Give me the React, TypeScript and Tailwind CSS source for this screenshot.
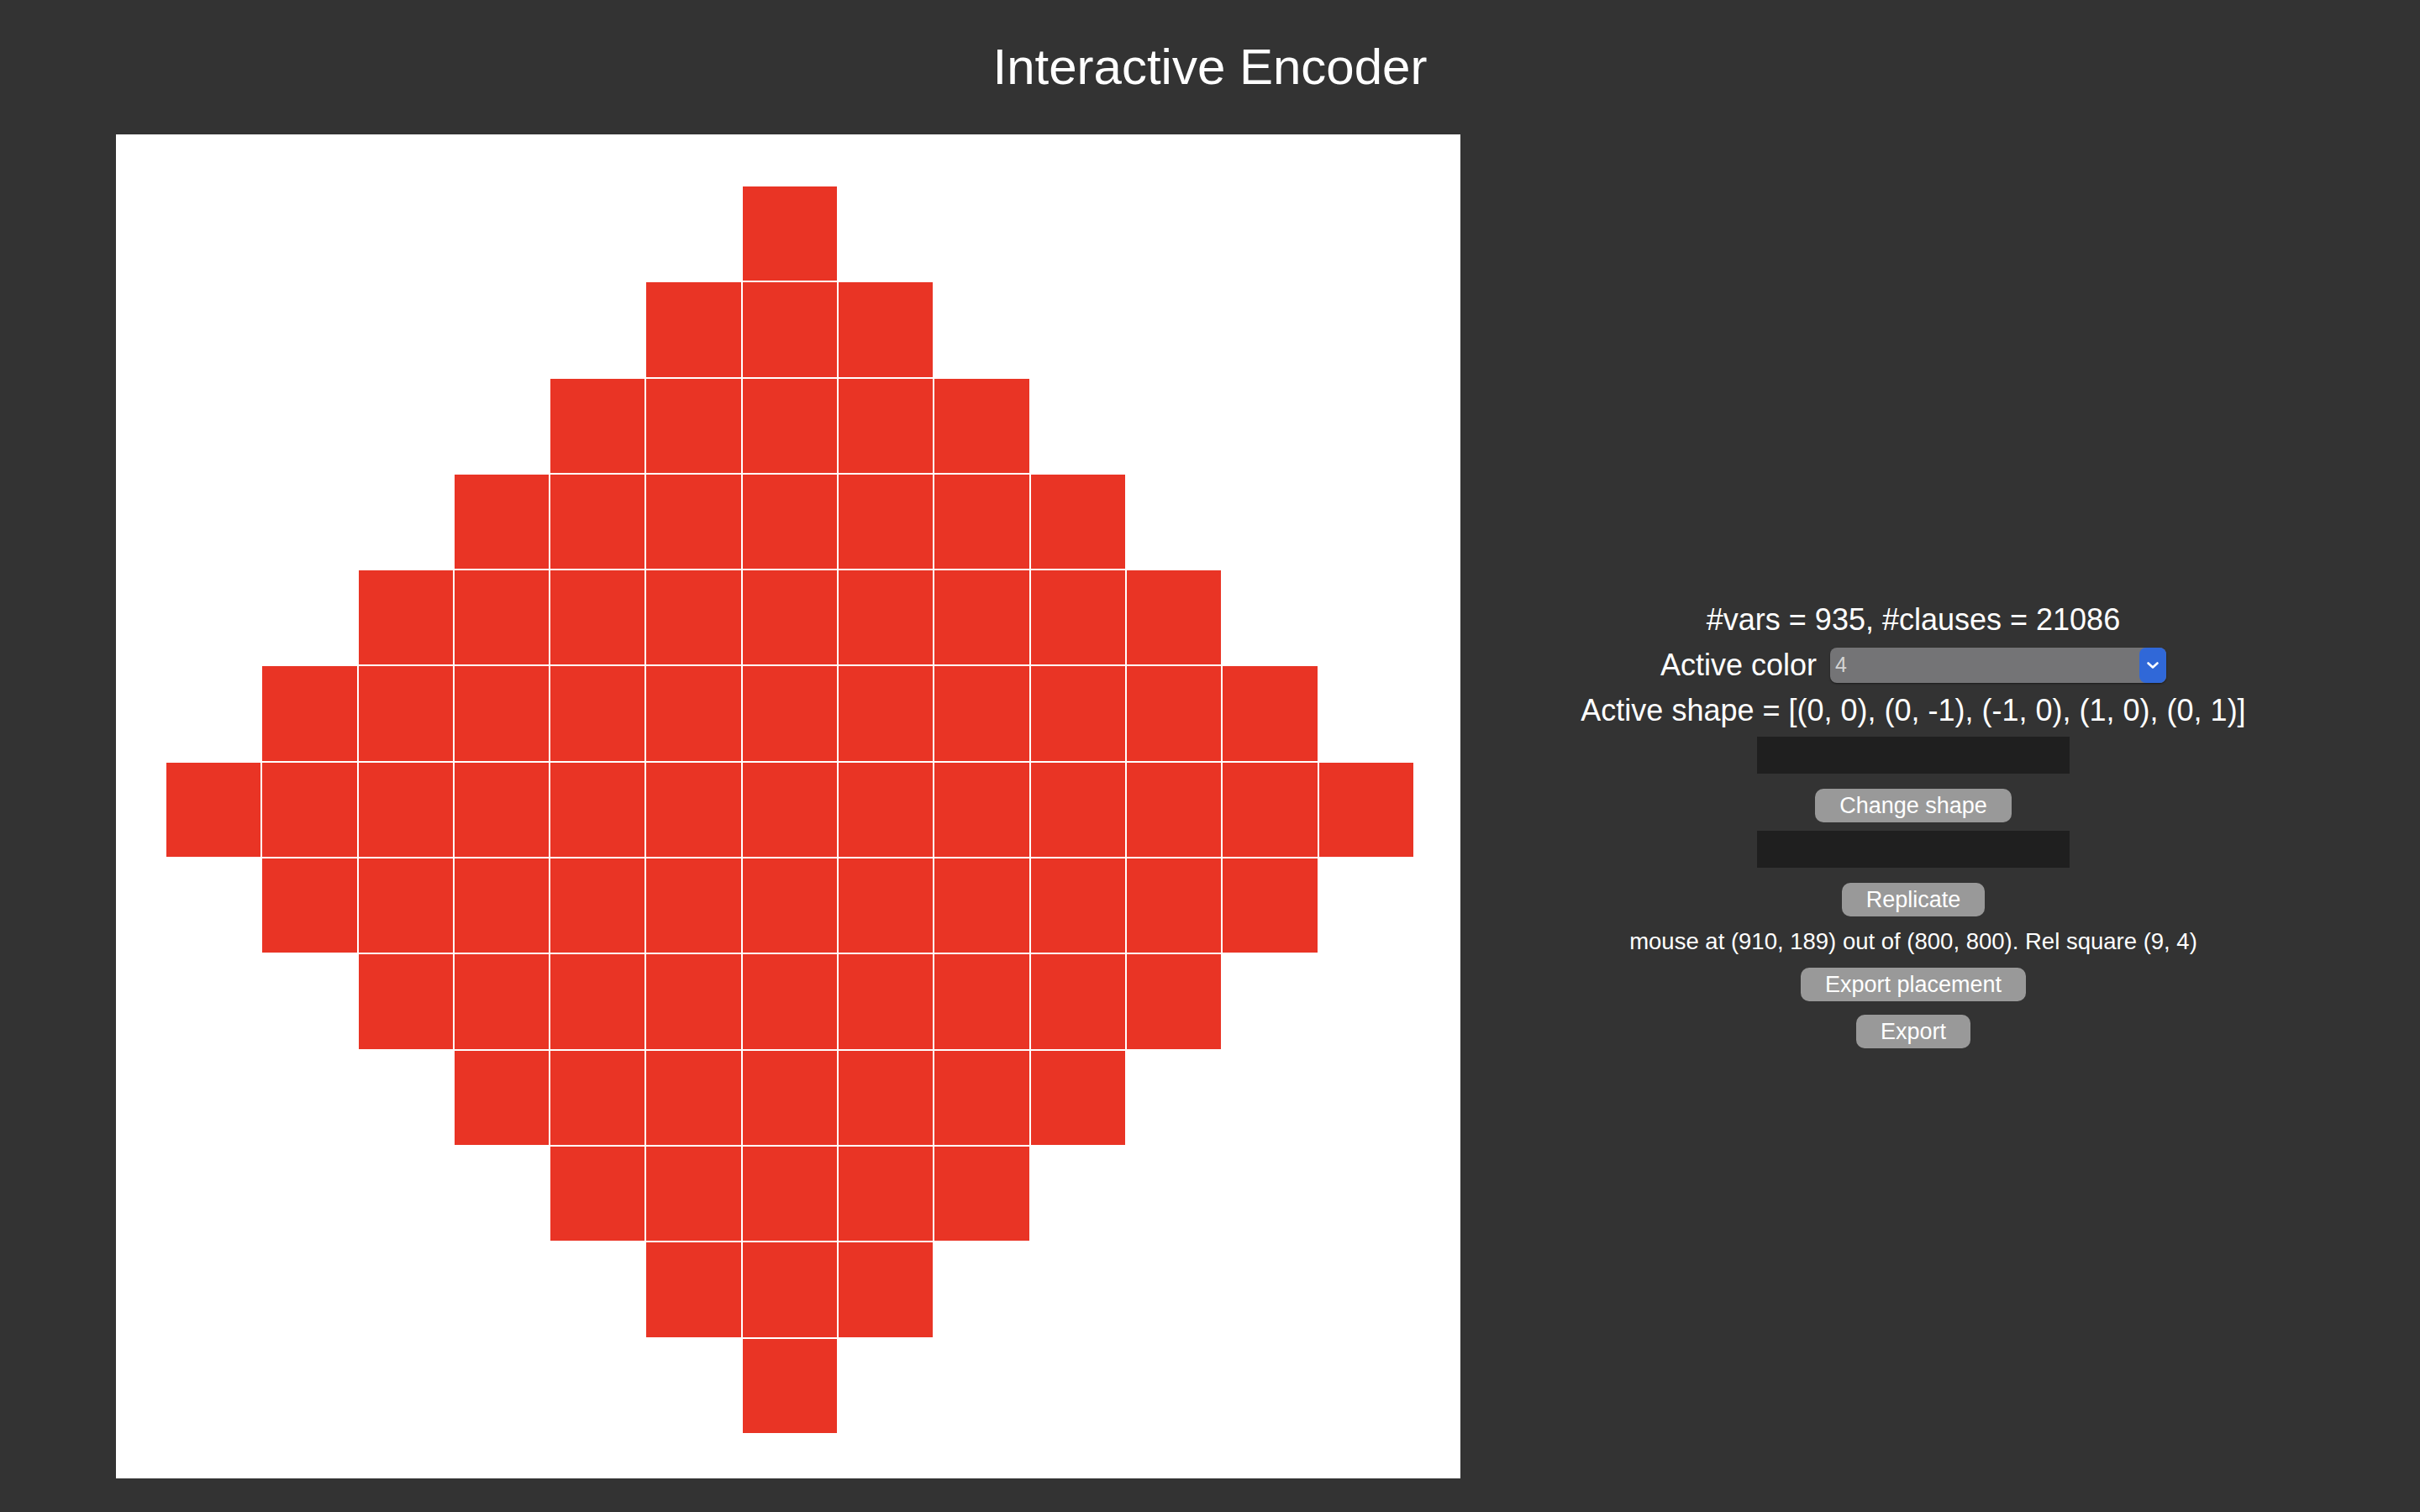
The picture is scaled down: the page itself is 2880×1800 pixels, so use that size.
import React from 'react';

const SIZE = 13;
const MID = 6;

const cells = Array.from({ length: SIZE * SIZE }, (_, i) => {
  const r = Math.floor(i / SIZE);
  const c = i % SIZE;
  return Math.abs(r - MID) + Math.abs(c - MID) <= MID;
});

function Board() {
  return (
    <div className="w-[1600px] h-[1600px] shrink-0 bg-white pl-[60px] pt-[62px]">
      <div className="grid grid-cols-[repeat(13,112.3px)] grid-rows-[repeat(13,112.3px)] gap-[2px]">
        {cells.map((filled, i) => (
          <div key={i} className={filled ? 'bg-[#e93425]' : ''} />
        ))}
      </div>
    </div>
  );
}

function GrayButton({ children }: { children: React.ReactNode }) {
  return (
    <button className="h-[40px] px-[29px] rounded-[10px] bg-[#999999] text-white text-[27px] leading-none">
      {children}
    </button>
  );
}

function Controls() {
  return (
    <div className="w-[1078px] flex flex-col items-center pt-[551px] text-white">
      <div className="h-[54px] leading-[54px] text-[36px]">#vars = 935, #clauses = 21086</div>

      <div className="h-[54px] flex items-center gap-[16px]">
        <span className="leading-[54px] text-[36px]">Active color</span>
        <div className="relative w-[400px] h-[42px] rounded-[8px] bg-[#747476] shadow-[0_1px_2px_rgba(0,0,0,0.5)] flex items-center">
          <span className="pl-[6px] text-[25px] text-[#d4d4d4]">4</span>
          <div className="absolute right-0 top-0 w-[32px] h-[42px] rounded-[8px] bg-[#3068d8] flex items-center justify-center">
            <svg width="16" height="10" viewBox="0 0 16 10" fill="none">
              <path d="M2.5 2.5 L8 7.5 L13.5 2.5" stroke="white" strokeWidth="2.6" strokeLinecap="round" strokeLinejoin="round" />
            </svg>
          </div>
        </div>
      </div>

      <div className="h-[54px] leading-[54px] text-[36px]">
        Active shape = [(0, 0), (0, -1), (-1, 0), (1, 0), (0, 1)]
      </div>

      <div className="mt-[4px] w-[372px] h-[44px] bg-[#1f1f1f]" />

      <div className="mt-[18px]">
        <GrayButton>Change shape</GrayButton>
      </div>

      <div className="mt-[10px] w-[372px] h-[44px] bg-[#1f1f1f]" />

      <div className="mt-[18px]">
        <GrayButton>Replicate</GrayButton>
      </div>

      <div className="mt-[10px] h-[40px] leading-[40px] text-[27.5px]">
        mouse at (910, 189) out of (800, 800). Rel square (9, 4)
      </div>

      <div className="mt-[11px]">
        <GrayButton>Export placement</GrayButton>
      </div>

      <div className="mt-[16px]">
        <GrayButton>Export</GrayButton>
      </div>
    </div>
  );
}

export default function App() {
  return (
    <div className="min-h-screen w-full bg-[#333333] font-['Liberation_Sans',Arial,sans-serif]">
      <h1 className="pt-[50px] text-center text-white text-[60px] leading-none">Interactive Encoder</h1>
      <div className="mt-[50px] flex pl-[138px]">
        <Board />
        <Controls />
      </div>
    </div>
  );
}
